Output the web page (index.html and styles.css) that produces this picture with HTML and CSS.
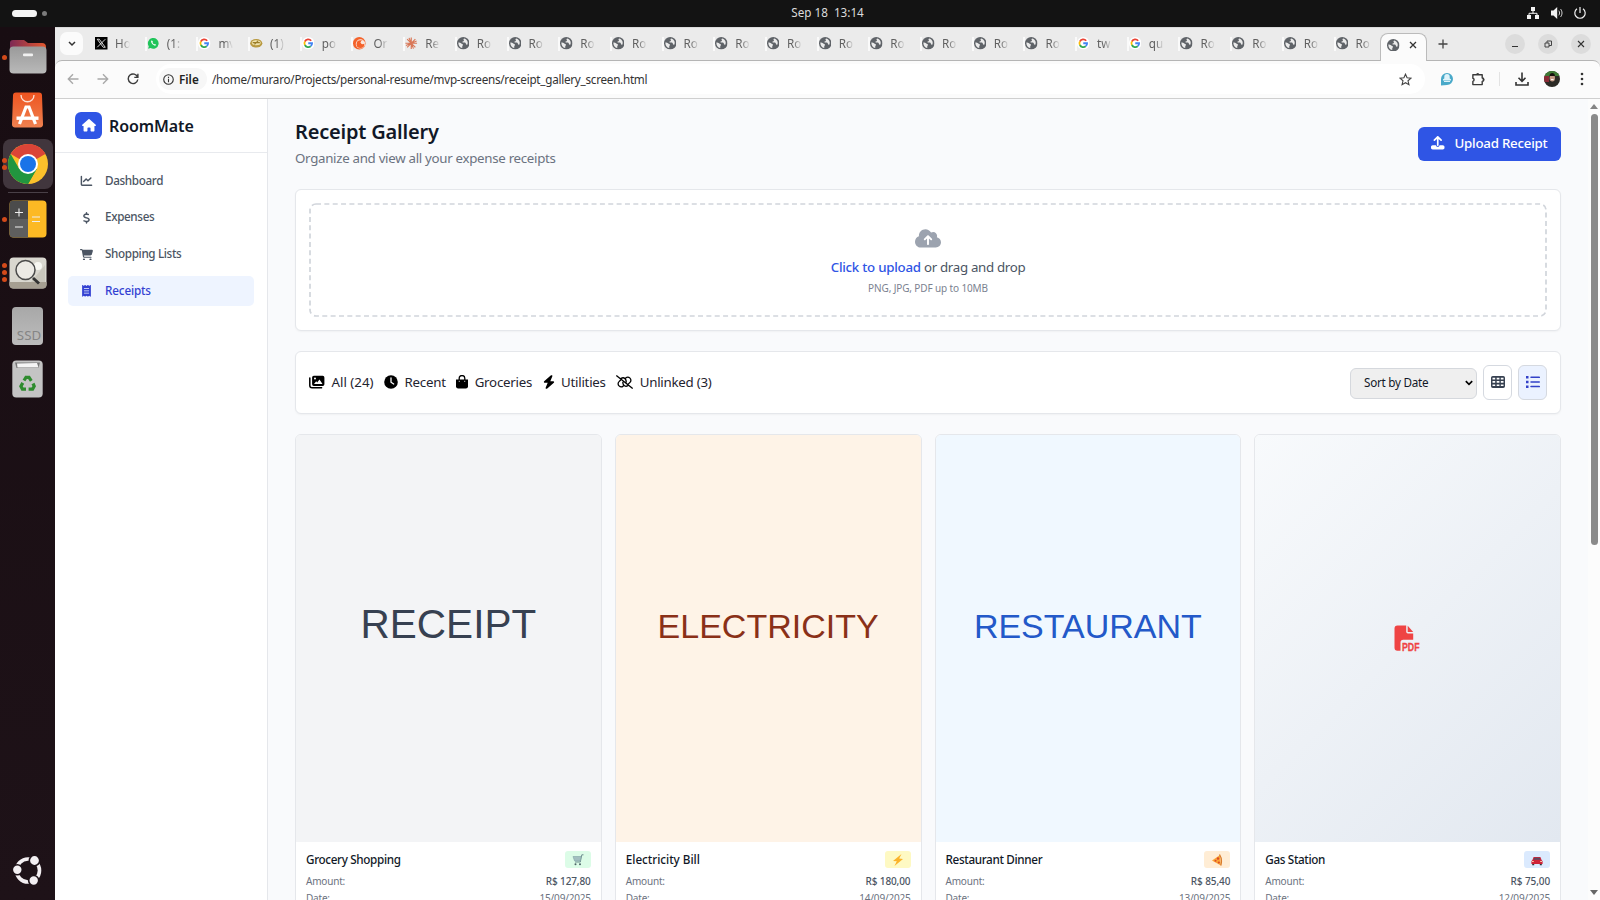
FILE: index.html
```html
<!DOCTYPE html>
<html lang="en">
<head>
<meta charset="utf-8">
<title>Receipt Gallery</title>
<link rel="stylesheet" href="styles.css">
</head>
<body>
<svg width="0" height="0" class="defs">
  <symbol id="globe" viewBox="0 0 14 14"><circle cx="7" cy="7" r="7" fill="#5f6368"/><path d="M8.2 1.6c-.9.3-1.2 1.2-.6 1.9.5.6.1 1.2-.7 1.3-.9.1-1 .9-.4 1.4h2.2c1 0 1.200.9 1.300 1.700.1.700.8.800 1.500.7.5-.9.700-2 .4-3.200-.5-1.900-1.900-3.300-3.700-3.800zM1.500 6.200c1.200.1 2.500.4 3.300 1.200.6.7 1.600.4 1.900 1.200.2.800-.7.900-.8 1.700-.1.800.2 1.300-.1 2.100C3.300 12 1.300 9.300 1.500 6.200z" fill="#ebebeb"/></symbol>
  <symbol id="google" viewBox="0 0 14 14"><circle cx="7" cy="7" r="7" fill="#fff"/><g fill="none" stroke-width="2"><path d="M10.300 4.200A4.300 4.300 0 0 0 3.200 5" stroke="#ea4335"/><path d="M3.200 5a4.300 4.300 0 0 0 0 4" stroke="#fbbc05"/><path d="M3.200 9a4.300 4.300 0 0 0 6.600 1.300" stroke="#34a853"/><path d="M9.800 10.300A4.300 4.300 0 0 0 11.300 7H7" stroke="#4285f4"/></g></symbol>
</svg>

<div class="topbar">
  <div class="workspaces"><span class="pill"></span><span class="dot"></span></div>
  <div class="clock">Sep 18&nbsp; 13:14</div>
  <div class="tray">
    <svg width="14" height="14" viewBox="0 0 14 14" fill="#f2f2f2"><path d="M5 1h4v4H5zM1 9h4v4H1zM9 9h4v4H9z"/><path d="M7 5v2.500M3 9V7.300h8V9" fill="none" stroke="#f2f2f2"/></svg>
    <svg width="14" height="14" viewBox="0 0 14 14"><path d="M1 4.500h2.500L7.200 1v12L3.500 9.500H1z" fill="#f2f2f2"/><path d="M8.800 4.700c1 1.300 1 3.300 0 4.600M10.500 3c2 2.300 2 5.700 0 8" fill="none" stroke="#d0d0d0"/></svg>
    <svg width="14" height="14" viewBox="0 0 14 14" fill="none" stroke="#f2f2f2" stroke-width="1.200"><path d="M4 2.800a5.200 5.200 0 1 0 6 0M7 1v6"/></svg>
  </div>
</div>

<div class="desktop">
  <div class="dock">
    <div class="app files"><i class="run"><b></b></i>
      <svg width="38" height="34" viewBox="0 0 38 34"><defs><linearGradient id="fg"><stop offset="0" stop-color="#7d2a55"/><stop offset="1" stop-color="#e4572e"/></linearGradient><linearGradient id="gg" x2="0" y2="1"><stop offset="0" stop-color="#9a9a9a"/><stop offset="1" stop-color="#b9b9b9"/></linearGradient></defs><path d="M1 3a3 3 0 0 1 3-3h11l4 3h14a4 4 0 0 1 4 4v12H1z" fill="url(#fg)"/><rect x=".5" y="6.500" width="37" height="27" rx="4" fill="url(#gg)"/><rect x="14" y="13.500" width="10" height="2.700" rx="1" fill="#f1f1f1"/></svg></div>
    <div class="app">
      <svg width="31" height="36" viewBox="0 0 31 36"><defs><linearGradient id="sg" x2="0" y2="1"><stop offset="0" stop-color="#ee5420"/><stop offset="1" stop-color="#ef8150"/></linearGradient></defs><path d="M4 .5h23a3 3 0 0 1 3 3L31 32a3 3 0 0 1-3 3.500H3A3 3 0 0 1 0 32L1 3.500a3 3 0 0 1 3-3z" fill="url(#sg)"/><path d="M9 3c0 9 13 9 13 0" fill="none" stroke="#fbe1d6" stroke-width="1.300"/><path d="M7.500 32l6.500-17h3l6.500 17" fill="none" stroke="#fff" stroke-width="3.200"/><path d="M4.500 26.200h22" stroke="#fff" stroke-width="3.400"/></svg></div>
    <div class="app chrome"><i class="run"><b></b><b></b></i>
      <svg width="40" height="40" viewBox="0 0 40 40"><circle cx="20" cy="20" r="20" fill="#fbc02b"/><path d="M20 20L2.700 10A20 20 0 0 1 37.300 10z" fill="#db4437"/><path d="M20 0a20 20 0 0 1 17.300 10H20z" fill="#db4437"/><path d="M2.700 10A20 20 0 0 0 20 40l8.700-15L20 20l-8.700 5z" fill="#22963f"/><path d="M20 40l8.700-15H20z" fill="#22963f"/><circle cx="20" cy="20" r="10" fill="#fff"/><circle cx="20" cy="20" r="8" fill="#1a73e8"/></svg></div>
    <div class="rule"></div>
    <div class="app"><i class="run"><b></b></i>
      <svg width="38" height="38" viewBox="0 0 38 38"><rect x=".5" y=".5" width="37" height="37" rx="4" fill="#fcb924"/><path d="M19 .5H4.500a4 4 0 0 0-4 4V19H19z" fill="#4b4b4b"/><path d="M19 19H.5v14.500a4 4 0 0 0 4 4H19z" fill="#5e5e5e"/><path d="M6 12.500h8M10 8.500v8M6 27h8M23 17h8M23 21.500h8" stroke="#eee" stroke-width="1.100"/></svg></div>
    <div class="app viewer"><i class="run"><b></b><b></b><b></b></i>
      <svg width="38" height="32" viewBox="0 0 38 32"><rect x=".5" y=".5" width="37" height="31" rx="4" fill="#d9d7cf"/><path d="M.5 25h37v2.500a4 4 0 0 1-4 4h-29a4 4 0 0 1-4-4z" fill="#a69f92"/><path d="M22 25L36 8v17z" fill="#c9c6bc"/><circle cx="29" cy="9" r="4" fill="#f7f7f2"/><circle cx="16.500" cy="13" r="9.500" fill="#eceae5" stroke="#4b4b4b" stroke-width="1.500"/><path d="M24 21l6 5.500" stroke="#333" stroke-width="3"/></svg></div>
    <div class="app ssd"><span>SSD</span></div>
    <div class="app">
      <svg width="31" height="38" viewBox="0 0 31 38"><rect x=".3" y=".5" width="30.400" height="37" rx="4" fill="#c4c4c4"/><path d="M3 2.500h25l-1.500 5.500h-22z" fill="#777"/><path d="M5 3.500l20-.5 1.500 4.500H5.500z" fill="#f5f5f5"/><g fill="none" stroke="#2e8b2e" stroke-width="3.200"><path d="M12 20.500l2-3.200h3l2.300 3.500"/><path d="M21 23.500l1.200 2.700-1.600 2.900h-4"/><path d="M14 29.100h-3.600l-1.500-2.900 1.900-3.300"/></g></svg></div>
    <div class="launcher">
      <svg width="30" height="30" viewBox="0 0 30 30"><circle cx="15" cy="15.500" r="11.500" fill="none" stroke="#f3eff2" stroke-width="3.600"/><g fill="#f3eff2" stroke="#1d1218" stroke-width="1.600"><circle cx="21.500" cy="5.500" r="5.200"/><circle cx="4.300" cy="14.800" r="5"/><circle cx="20.700" cy="25.500" r="5"/></g></svg></div>
  </div>

  <div class="window">
    <div class="tabstrip">
      <div class="tabsearch"><svg width="8" height="6" viewBox="0 0 8 6"><path d="M1 1l3 3 3-3" fill="none" stroke="#333" stroke-width="1.500"/></svg></div>
      <div class="tabs" id="tabs">
        <div class="tab"><svg viewBox="0 0 14 14"><path d="M0 0h14v14H0z"/><path d="M2.500 2.500h2.300l6.700 9H9.200zM11.500 2.500l-9 9" fill="none" stroke="#eee"/></svg><span>Ho</span></div>
        <div class="tab"><svg viewBox="0 0 14 14"><path d="M1.200 13.200L2 10.400A6 6 0 1 1 4 12.300z" fill="#20c45a"/><path d="M4.800 4c-1 2 2 5.600 4.400 5.900l1-1.200-1.500-.9-.8.600-1.800-1.900.6-.9-.8-1.500z" fill="#fff"/></svg><span>(1:</span></div>
        <div class="tab"><svg><use href="#google"/></svg><span>mv</span></div>
        <div class="tab"><svg viewBox="0 0 14 14"><ellipse cx="7" cy="7" rx="6.800" ry="4.800" fill="#b8993f"/><ellipse cx="7" cy="6.300" rx="5" ry="2.800" fill="#efe3ae"/><path d="M3 6.300h8M5 8.300l4-4" stroke="#9b7d28" stroke-width="1.200"/></svg><span>(1)</span></div>
        <div class="tab"><svg><use href="#google"/></svg><span>po</span></div>
        <div class="tab"><svg viewBox="0 0 14 14"><circle cx="7" cy="7" r="7" fill="#f4622a"/><circle cx="8.300" cy="7.800" r="5.200" fill="#fbe6dc"/><circle cx="8.300" cy="8" r="4.300" fill="#f4622a"/><circle cx="10.800" cy="6" r="2.200" fill="#fbe6dc"/></svg><span>Or</span></div>
        <div class="tab"><svg viewBox="0 0 14 14"><path d="M7 .5v13M.5 7h13M2.400 2.400l9.200 9.200M11.600 2.400l-9.200 9.200M4.500 1l5 12M1 9.500l12-5" stroke="#d97757" stroke-width="1.300"/></svg><span>Re</span></div>
      </div>
      <div class="active"><svg class="fav"><use href="#globe"/></svg><svg class="x" viewBox="0 0 8 8"><path d="M1 1l6 6M7 1L1 7" stroke="#333" stroke-width="1.300"/></svg></div>
      <svg class="plus" viewBox="0 0 10 10"><path d="M5 .5v9M.5 5h9" stroke="#444" stroke-width="1.300"/></svg>
      <div class="wm">
        <b><svg viewBox="0 0 8 8"><path d="M1 6.500h6" stroke="#333"/></svg></b>
        <b><svg viewBox="0 0 8 8"><path d="M1 3h4v4H1zM3 3V1h4.500v4.500H5" fill="none" stroke="#444"/></svg></b>
        <b><svg viewBox="0 0 8 8"><path d="M1 1l6 6M7 1L1 7" stroke="#333" stroke-width="1.100"/></svg></b>
      </div>
    </div>
    <div class="toolbar">
      <svg class="nav" viewBox="0 0 12 12"><path d="M11.500 6H1.500M6 1.300L1.300 6 6 10.700" stroke="#a9a9a9"/></svg>
      <svg class="nav" viewBox="0 0 12 12"><path d="M.5 6h10M6 1.300L10.700 6 6 10.700" stroke="#a9a9a9"/></svg>
      <svg class="nav" viewBox="0 0 12 12"><path d="M10.600 4.200A4.800 4.800 0 1 0 10.800 6.500M10.900.8v3.600H7.300" stroke="#3c3c3c"/></svg>
      <div class="omnibox">
        <div class="chip"><svg viewBox="0 0 12 12"><circle cx="6" cy="6" r="5.200" fill="none" stroke="#333" stroke-width="1.200"/><path d="M6 5.300V9M6 3v1.300" stroke="#333" stroke-width="1.200"/></svg>File</div>
        <div class="url">/home/muraro/Projects/personal-resume/mvp-screens/receipt_gallery_screen.html</div>
        <svg class="star" viewBox="0 0 14 14"><path d="M7 1.300l1.700 3.900 4.200.4-3.200 2.800 1 4.200L7 10.400l-3.700 2.200 1-4.200L1.100 5.600l4.200-.4z" fill="none" stroke="#444" stroke-width="1.200"/></svg>
      </div>
      <div class="tools">
        <svg class="i-ext" viewBox="0 0 14 14"><path d="M1 13.500V7a6 6 0 1 1 6 6z" fill="#49a9c9"/><path d="M3 8.500h8V7.200L9.700 6.500V4.800A2.700 2.700 0 0 0 4.300 4.800v1.700L3 7.200z" fill="#dff3fa"/><path d="M4 9.500h6" stroke="#dff3fa"/></svg>
        <svg class="i-puz" viewBox="0 0 14 15"><path d="M1.500 3h10v3.500a1.500 1.500 0 0 1 0 3.500v3.500h-10V10a1.700 1.700 0 0 0 0-3.300z" fill="none" stroke="#3a3a3a" stroke-width="1.500" stroke-linejoin="round"/><path d="M5 2.800a1.700 1.700 0 0 1 3.400 0zM12 6.500a1.700 1.700 0 0 1 0 3.500z" fill="#3a3a3a"/></svg>
        <span class="bar"></span>
        <svg class="i-dl" viewBox="0 0 14 14"><path d="M7 .5v8.500M3.500 5.800L7 9.300l3.500-3.500M1 10v3h12v-3" fill="none" stroke="#333" stroke-width="1.600"/></svg>
        <svg class="i-av" viewBox="0 0 16 16"><defs><clipPath id="av"><circle cx="8" cy="8" r="8"/></clipPath></defs><g clip-path="url(#av)"><path d="M0 0h16v16H0z" fill="#2c2a25"/><path d="M0 0h16v5H0z" fill="#3f7a35"/><path d="M0 5h5v6H0z" fill="#8a2a35"/><ellipse cx="8.300" cy="7" rx="2.700" ry="3.500" fill="#c49a86"/><path d="M5.500 5c0-4 5.500-4 5.500 0z" fill="#17110f"/><path d="M7 8.600h2.600" stroke="#fff"/></g></svg>
        <svg class="i-dots" viewBox="0 0 4 14" fill="#333"><circle cx="2" cy="2" r="1.300"/><circle cx="2" cy="7" r="1.300"/><circle cx="2" cy="12" r="1.300"/></svg>
      </div>
    </div>

    <div class="page">
      <aside class="sidebar">
        <div class="brand">
          <span class="logo"><svg viewBox="0 0 576 512" fill="#fff"><path d="M575.8 255.500c0 18-15 32.100-32 32.100h-32l.7 160.200c0 2.700-.2 5.400-.5 8.100V472c0 22.100-17.900 40-40 40H392c-22.100 0-40-17.900-40-40V384c0-17.700-14.300-32-32-32H256c-17.700 0-32 14.300-32 32v88c0 22.100-17.900 40-40 40H104c-22.100 0-40-17.900-40-40V287.600H32c-18 0-32-14-32-32.100c0-9 3-17 10-24L266.400 8c7-7 15-8 22-8s15 2 21 7L564.800 231.500c8 7 12 15 11 24z"/></svg></span>
          <span class="name">RoomMate</span>
        </div>
        <nav class="menu">
          <a><svg viewBox="0 0 512 512"><path d="M64 64c0-17.700-14.300-32-32-32S0 46.300 0 64V400c0 44.200 35.800 80 80 80H480c17.700 0 32-14.300 32-32s-14.300-32-32-32H80c-8.800 0-16-7.200-16-16V64zm406.600 86.600c12.500-12.500 12.500-32.800 0-45.300s-32.800-12.500-45.300 0L320 210.700l-57.400-57.400c-12.500-12.500-32.800-12.500-45.300 0l-112 112c-12.500 12.500-12.500 32.800 0 45.300s32.800 12.500 45.300 0L240 221.300l57.400 57.400c12.500 12.500 32.800 12.500 45.300 0l128-128z"/></svg><span>Dashboard</span></a>
          <a><svg viewBox="0 0 320 512"><path d="M160 0c17.700 0 32 14.300 32 32V67.700c1.600 .2 3.100 .4 4.700 .7c.4 .1 .7 .1 1.100 .2l48 8.800c17.400 3.200 28.900 19.900 25.700 37.200s-19.900 28.900-37.200 25.700l-47.500-8.700c-31.300-4.600-58.900-1.500-78.300 6.200s-27.200 18.300-29 28.100c-2 10.700-.5 16.700 1.200 20.400c1.800 3.900 5.500 8.300 12.800 13.200c16.300 10.700 41.300 17.700 73.700 26.300l2.900 .8c28.600 7.600 63.600 16.800 89.600 33.800c14.200 9.300 27.600 21.900 35.900 39.500c8.500 17.900 10.300 37.900 6.400 59.200c-6.900 38-33.100 63.400-65.600 76.700c-13.700 5.600-28.600 9.200-44.400 11V480c0 17.700-14.300 32-32 32s-32-14.300-32-32V445.100c-.4-.1-.9-.1-1.300-.2l-.2 0c-24.400-3.800-64.500-14.300-91.500-26.300c-16.100-7.200-23.400-26.100-16.200-42.200s26.100-23.400 42.200-16.200c20.900 9.300 55.300 18.500 75.200 21.600c31.900 4.700 58.200 2 76-5.300c16.900-6.900 24.600-16.900 26.800-28.900c1.900-10.600 .4-16.700-1.300-20.400c-1.900-4-5.600-8.400-13-13.300c-16.400-10.700-41.500-17.700-74-26.300l-2.800-.7C119.400 279.300 84.400 270 58.400 253c-14.200-9.300-27.500-22-35.800-39.600c-8.400-17.900-10.100-37.900-6.100-59.200C23.700 116 52.300 91.200 84.800 78.300c13.300-5.300 27.900-8.900 43.200-11V32c0-17.700 14.300-32 32-32z"/></svg><span>Expenses</span></a>
          <a><svg viewBox="0 0 576 512"><path d="M0 24C0 10.700 10.700 0 24 0H69.500c22 0 41.500 12.800 50.600 32h411c26.300 0 45.500 25 38.600 50.400l-41 152.300c-8.500 31.400-37 53.300-69.500 53.300H170.700l5.400 28.500c2.200 11.300 12.100 19.500 23.600 19.500H488c13.300 0 24 10.700 24 24s-10.700 24-24 24H199.700c-34.600 0-64.300-24.600-70.700-58.500L77.400 54.500c-.7-3.800-4-6.500-7.900-6.500H24C10.700 48 0 37.300 0 24zM128 464a48 48 0 1 1 96 0 48 48 0 1 1 -96 0zm336-48a48 48 0 1 1 0 96 48 48 0 1 1 0-96z"/></svg><span>Shopping Lists</span></a>
          <a class="on"><svg viewBox="0 0 384 512"><path fill-rule="evenodd" d="M14 2c6-3 13-2 18 3l40 34 48-36c6-4 13-4 18 0l54 36 54-36c5-4 12-4 18 0l48 36 40-34c5-5 12-6 18-3s14 8 14 22v464c0 14-8 19-14 22s-13 2-18-3l-40-34-48 36c-6 4-13 4-18 0l-54-36-54 36c-5 4-12 4-18 0l-48-36-40 34c-5 5-12 6-18 3S0 502 0 488V24C0 10 8 5 14 2zM80 144v32h224v-32zM80 240v32h224v-32zM80 336v32h224v-32z"/></svg><span>Receipts</span></a>
        </nav>
      </aside>

      <main class="main">
        <header class="head">
          <div><h1>Receipt Gallery</h1><p>Organize and view all your expense receipts</p></div>
          <button class="upload"><svg viewBox="0 0 512 512" fill="#fff"><path d="M288 109.300V352c0 17.700-14.300 32-32 32s-32-14.300-32-32V109.300l-73.400 73.400c-12.500 12.500-32.800 12.500-45.300 0s-12.500-32.800 0-45.300l128-128c12.500-12.500 32.800-12.500 45.300 0l128 128c12.500 12.500 12.500 32.800 0 45.300s-32.800 12.500-45.300 0L288 109.300zM64 352H192c0 35.300 28.700 64 64 64s64-28.700 64-64H448c35.300 0 64 28.700 64 64v32c0 35.300-28.700 64-64 64H64c-35.300 0-64-28.700-64-64V416c0-35.300 28.700-64 64-64z"/></svg><span>Upload Receipt</span></button>
        </header>

        <section class="panel dropwrap">
          <div class="drop">
            <svg class="dash"><rect x="1" y="1" width="1236" height="112" rx="6"/></svg>
            <svg class="cloud" viewBox="0 0 640 512"><path d="M144 480C64.500 480 0 415.500 0 336c0-62.800 40.200-116.200 96.200-135.900c-.1-2.700-.2-5.400-.2-8.100c0-88.400 71.600-160 160-160c59.300 0 111 32.200 138.700 80.200C409.900 102 428.300 96 448 96c53 0 96 43 96 96c0 12.200-2.300 23.800-6.400 34.600C596 238.400 640 290.100 640 352c0 70.700-57.300 128-128 128H144zm79-217c-9.400 9.400-9.400 24.600 0 33.900s24.600 9.400 33.900 0l39-39V392c0 13.300 10.700 24 24 24s24-10.700 24-24V257.900l39 39c9.400 9.400 24.600 9.400 33.900 0s9.400-24.600 0-33.900l-80-80c-9.400-9.400-24.600-9.400-33.900 0l-80 80z"/></svg>
            <p class="cta"><b>Click to upload</b> or drag and drop</p>
            <p class="hint">PNG, JPG, PDF up to 10MB</p>
          </div>
        </section>

        <section class="panel filters">
          <div class="chips">
            <span class="all"><svg width="16" height="14" viewBox="0 0 16 14"><path d="M.8 3v7.500a2.300 2.300 0 0 0 2.300 2.300h9.500" fill="none" stroke="#000" stroke-width="1.500" stroke-linecap="round"/><path fill-rule="evenodd" d="M4.800.8h8.900a1.700 1.700 0 0 1 1.700 1.700v6.700a1.700 1.700 0 0 1-1.700 1.700H4.800a1.700 1.700 0 0 1-1.700-1.700V2.500A1.700 1.700 0 0 1 4.800.8zM5 9h8.500l-3-4.600-2.300 3-1-1.200zM5 3.400a1 1 0 1 0 2 0 1 1 0 1 0-2 0z"/></svg>All (24)</span>
            <span><svg width="14" height="14" viewBox="0 0 14 14"><circle cx="7" cy="7" r="6.800"/><path d="M7 3v4.200l2.700 1.800" fill="none" stroke="#fff" stroke-width="1.300" stroke-linecap="round"/></svg>Recent</span>
            <span><svg width="12" height="14" viewBox="0 0 12 14"><path d="M0 4.500h12v6.800a2.200 2.200 0 0 1-2.200 2.200H2.200A2.200 2.200 0 0 1 0 11.300z"/><path d="M3.200 6.500V3.300a2.800 2.800 0 0 1 5.600 0v3.200" fill="none" stroke="#000" stroke-width="1.300"/><path d="M2.800 6.300h.9M8.300 6.300h.9" stroke="#fff"/></svg>Groceries</span>
            <span><svg width="12" height="14" viewBox="0 0 448 512"><path d="M349.400 44.600c5.900-13.700 1.500-29.700-10.600-38.500s-28.600-8-39.900 1.800l-256 224c-10 8.800-13.600 22.900-8.900 35.300S50.700 288 64 288H175.500L98.600 467.400c-5.900 13.700-1.500 29.700 10.600 38.500s28.600 8 39.900-1.800l256-224c10-8.800 13.600-22.900 8.900-35.300s-16.600-20.700-30-20.700H272.500L349.400 44.600z"/></svg>Utilities</span>
            <span><svg width="17" height="14" viewBox="0 0 640 512"><path fill="none" stroke="#000" stroke-width="50" stroke-linecap="round" d="M24 24L616 488M196 120a114 114 0 0 1 150 20c44 46 44 108 24 160M366 108c44-42 114-42 160 2s46 116 0 160l-66 66M444 392a114 114 0 0 1-150-20c-30-32-40-70-34-110M274 404c-44 42-114 42-160-2s-46-116 0-160l52-52"/></svg>Unlinked (3)</span>
          </div>
          <div class="ctl">
            <div class="select"><span>Sort by Date</span><svg width="8" height="6" viewBox="0 0 8 6"><path d="M.8 1.200L4 4.300l3.200-3.100" fill="none" stroke="#000" stroke-width="1.700"/></svg></div>
            <div class="vb"><svg viewBox="0 0 14 12"><path fill-rule="evenodd" d="M1.800 0h10.400A1.800 1.800 0 0 1 14 1.800v8.400a1.800 1.800 0 0 1-1.800 1.800H1.800A1.800 1.800 0 0 1 0 10.200V1.800A1.800 1.800 0 0 1 1.800 0zM1.500 1.800v1.700h2.700v-1.700zM5.700 1.800v1.700h2.700v-1.700zM9.800 1.800v1.700h2.700v-1.700zM1.500 5.100v1.700h2.700V5.100zM5.700 5.100v1.700h2.700V5.100zM9.800 5.100v1.700h2.700V5.100zM1.500 8.400v1.700h2.700v-1.700zM5.700 8.400v1.700h2.700v-1.700zM9.800 8.400v1.700h2.700v-1.700z" fill="#374151"/></svg></div>
            <div class="vb on"><svg viewBox="0 0 14 12"><path d="M0 0h2.500v2.500H0zM0 4.700h2.500v2.500H0zM0 9.400h2.500v2.500H0z" fill="#3341c8"/><path d="M5 1.300h8.300M5 6h8.300M5 10.600h8.300" stroke="#3341c8" stroke-width="1.500" stroke-linecap="round"/></svg></div>
          </div>
        </section>

        <section class="grid">
          <article class="card">
            <div class="img receipt">RECEIPT</div>
            <div class="body">
              <div class="row title"><h2>Grocery Shopping</h2><span class="badge green"><svg width="12" height="12" viewBox="0 0 12 12" fill="none"><path d="M11.500.8H9.800L8.300 8H3" stroke="#6f8f90"/><path d="M1 2.500h8L8.200 7H2.600z" fill="#a3bfc0" stroke="#7fa3a4" stroke-width=".6"/><circle cx="3.500" cy="10.300" r="1" fill="#4d6668"/><circle cx="8" cy="10.300" r="1" fill="#4d6668"/></svg></span></div>
              <div class="row meta"><span>Amount:</span><b>R$ 127,80</b></div>
              <div class="row meta date"><span>Date:</span><span>15/09/2025</span></div>
            </div>
          </article>
          <article class="card">
            <div class="img electric">ELECTRICITY</div>
            <div class="body">
              <div class="row title"><h2 class="loose">Electricity Bill</h2><span class="badge yellow"><svg width="12" height="12" viewBox="0 0 12 12"><path d="M9.500 0L1 7l3.800.3L2.500 12 11 5l-3.800-.4z" fill="#fbb32a"/></svg></span></div>
              <div class="row meta"><span>Amount:</span><b>R$ 180,00</b></div>
              <div class="row meta date"><span>Date:</span><span>14/09/2025</span></div>
            </div>
          </article>
          <article class="card">
            <div class="img restaurant">RESTAURANT</div>
            <div class="body">
              <div class="row title"><h2>Restaurant Dinner</h2><span class="badge orange"><svg width="12" height="12" viewBox="0 0 12 12"><path d="M1 6.500L9 1l.8 10.500z" fill="#fba537"/><path d="M8.500.5c2 3 2.400 7 1.300 11" fill="none" stroke="#d97c2b" stroke-width="1.300"/><circle cx="7" cy="4.500" r="1.200" fill="#dc4a28"/><circle cx="4.500" cy="6.700" r="1" fill="#dc4a28"/><circle cx="7.800" cy="8.500" r="1.100" fill="#dc4a28"/></svg></span></div>
              <div class="row meta"><span>Amount:</span><b>R$ 85,40</b></div>
              <div class="row meta date"><span>Date:</span><span>13/09/2025</span></div>
            </div>
          </article>
          <article class="card">
            <div class="img pdf"><svg width="27" height="27" viewBox="0 0 27 27"><path d="M3.500.5h8.700v6.200a1.700 1.700 0 0 0 1.700 1.700h5.300v6.400H9.300a2.800 2.800 0 0 0-2.800 2.800v8.100h-3A3 3 0 0 1 .5 22.700V3.500a3 3 0 0 1 3-3z" fill="#ef4444"/><path d="M13.700.7l5.500 6.200h-5.500z" fill="#ef4444"/><text x="8" y="25.500" textLength="17.500" lengthAdjust="spacingAndGlyphs" class="pdftext">PDF</text></svg></div>
            <div class="body">
              <div class="row title"><h2>Gas Station</h2><span class="badge blue"><svg width="12" height="12" viewBox="0 0 12 12"><path d="M2.600 3h6.800l1.200 3 1 1.200V10H.4V7.200l1-1.200z" fill="#cf2338"/><path d="M3.300 3.800h5.400l.8 2h-7z" fill="#5b4a60"/><path d="M1.200 10h2v1.300h-2zM8.800 10h2v1.300h-2z" fill="#333"/><path d="M1 7.500h1.800M9.200 7.500H11" stroke="#f9c9a8"/></svg></span></div>
              <div class="row meta"><span>Amount:</span><b>R$ 75,00</b></div>
              <div class="row meta date"><span>Date:</span><span>12/09/2025</span></div>
            </div>
          </article>
        </section>
      </main>

      <div class="scroll"><i class="up"></i><i class="thumb"></i><i class="down"></i></div>
    </div>
  </div>
</div>
<script src="tabs.js"></script>
</body>
</html>
```
FILE: tabs.js
```js
const labels = [...Array(12).fill('Ro'), 'tw', 'qu', ...Array(4).fill('Ro')];
const tabs = document.getElementById('tabs');
for (const label of labels) {
  const icon = label === 'Ro' ? 'globe' : 'google';
  tabs.insertAdjacentHTML('beforeend',
    `<div class="tab"><svg><use href="#${icon}"/></svg><span>${label}</span></div>`);
}
```
FILE: styles.css
```css
* { box-sizing: border-box; margin: 0; }
body { width: 1600px; height: 900px; overflow: hidden; background: #131313; font: 13.3px/20px "Noto Sans", "Open Sans", sans-serif; color: #111827; display: flex; flex-direction: column; }
svg { display: block; flex: none; }
.defs { position: absolute; }
h1, h2, p { font-weight: 400; }

.topbar { height: 27px; flex: none; display: grid; grid-template-columns: 1fr auto 1fr; align-items: center; background: #131313; padding-left: 55px; color: #dcdcdc; }
.workspaces { display: flex; align-items: center; gap: 5px; margin-left: -43px; }
.pill { width: 25px; height: 7px; border-radius: 4px; background: #f4f4f4; }
.dot { width: 5px; height: 5px; border-radius: 50%; background: #7b7b7b; }
.clock { font-size: 11.7px; line-height: 22px; padding-bottom: 3px; }
.tray { display: flex; justify-content: flex-end; gap: 9.500px; padding: 0 13px 1px 0; }

.desktop { flex: 1; min-height: 0; display: flex; }
.dock { width: 55px; flex: none; background: linear-gradient(#180d12, #1e1218); display: flex; flex-direction: column; align-items: center; padding-top: 5px; }
.app { position: relative; width: 50px; height: 50px; margin-bottom: 3.300px; border-radius: 8px; display: flex; align-items: center; justify-content: center; flex: none; }
.app.chrome { background: #41363d; }
.rule { width: 40px; height: 1px; background: #494047; margin-bottom: 1.500px; }
.run { position: absolute; left: -1px; top: 0; height: 50px; display: flex; flex-direction: column; justify-content: center; gap: 2px; }
.run b { width: 5px; height: 5px; border-radius: 50%; background: #d34a1a; }
.ssd span { width: 31px; height: 38px; border-radius: 4px; background: linear-gradient(#a8a8a8, #bcbcbc); color: #858585; font-size: 13.300px; line-height: 57px; padding-left: 3px; text-align: center; }
.launcher { margin-top: auto; margin-bottom: 15px; }

.window { flex: 1; min-width: 0; display: flex; flex-direction: column; background: #ebebeb; }
.tabstrip { height: 33px; flex: none; display: flex; align-items: center; border-top: 1px solid #dadada; padding-bottom: 1px; }
.tabsearch { width: 23px; height: 23px; border-radius: 7px; background: #fbfbfb; margin: 0 12px 0 5px; display: flex; align-items: center; justify-content: center; flex: none; }
.tabs { display: flex; width: 1285px; flex: none; }
.tab { width: 51.700px; height: 14px; display: flex; align-items: center; flex: none; border-right: 2px solid #fafafa; color: #606060; font-size: 11.700px; }
.tab svg { width: 12.500px; height: 12.500px; }
.tab span { width: 20px; margin-left: 7.500px; padding-bottom: 1px; -webkit-mask-image: linear-gradient(90deg, #000 30%, transparent 75%); mask-image: linear-gradient(90deg, #000 30%, transparent 75%); }
.tabs .tab:last-child { border-color: transparent; }
.active { width: 47px; height: 28px; align-self: flex-end; background: #fbfbfb; border: 1px solid #bbb; border-bottom: 0; border-radius: 8px 8px 0 0; display: flex; align-items: center; padding: 0 9px 5px 6px; justify-content: space-between; flex: none; margin-bottom: -2px; z-index: 1; }
.fav { width: 12.500px; height: 12.500px; }
.x { width: 8px; height: 8px; }
.plus { width: 10px; height: 10px; margin-left: 11px; }
.wm { margin-left: auto; display: flex; gap: 13px; padding-right: 9px; }
.wm b { width: 20px; height: 20px; border-radius: 50%; background: #dcdcdc; display: flex; align-items: center; justify-content: center; }
.wm svg { width: 8px; height: 8px; }

.toolbar { height: 39px; flex: none; background: #fbfbfb; border: 1px solid #b5b5b5; border-width: 1px 0; border-bottom-color: #cfcfcf; border-radius: 7px 7px 0 0; display: flex; align-items: center; padding: 0 0 1px 12px; }
.nav { width: 12px; height: 12px; fill: none; stroke-width: 1.400px; margin-right: 18px; }
.omnibox { width: 1269px; height: 30px; border-radius: 15px; background: #fff; display: flex; align-items: center; padding-left: 3px; flex: none; margin-left: -1px; }
.chip { width: 48px; height: 22px; border-radius: 11px; background: #f7f7f7; display: flex; align-items: center; gap: 5px; padding-left: 4px; font-size: 11.700px; line-height: 18px; font-weight: 600; color: #222; }
.chip svg { width: 11px; height: 11px; }
.url { margin-left: 5px; font-size: 11.700px; padding-bottom: 1px; letter-spacing: -.265px; color: #333; }
.star { width: 13px; height: 13px; margin-left: auto; margin-right: 13px; }
.tools { flex: 1; display: flex; align-items: center; padding-left: 15px; }
.tools svg { width: 14px; height: 14px; }
.tools .i-puz { margin-left: 17px; }
.tools .bar { width: 1px; height: 14px; background: #e3e3e3; margin-left: 14px; }
.tools .i-dl { margin-left: 14.500px; }
.tools .i-av { width: 16px; height: 16px; margin-left: 15px; }
.tools .i-dots { width: 4px; height: 14px; margin-left: 20px; }

.page { flex: 1; min-height: 0; display: flex; background: #f9fafc; overflow: hidden; }
.sidebar { width: 213px; flex: none; background: #fff; border-right: 1px solid #e5e7eb; }
.brand { height: 54px; border-bottom: 1px solid #e8eaee; display: flex; align-items: center; padding-left: 20px; gap: 7px; }
.logo { width: 27px; height: 27px; border-radius: 6px; background: #2f55e5; display: flex; align-items: center; justify-content: center; }
.logo svg { width: 14px; height: 12.500px; }
.name { font-size: 16px; font-weight: 600; letter-spacing: -.1px; }
.menu { padding: 13px; display: flex; flex-direction: column; gap: 6.700px; }
.menu a { height: 30px; border-radius: 5px; display: flex; align-items: center; padding-left: 12px; color: #4b5563; font-size: 11.700px; font-weight: 500; letter-spacing: -.36px; }
.menu span { padding-bottom: 3px; }
.menu svg { width: 13px; height: 11.700px; margin-right: 12px; fill: #4b5563; }
.menu a.on { background: #eef4ff; color: #3341d2; letter-spacing: -.15px; }
.menu a.on svg { fill: #3341d2; }

.main { width: 1320px; flex: none; padding: 19px 27px 0; }
.head { display: flex; justify-content: space-between; height: 71px; }
.head h1 { font-size: 20px; line-height: 27px; font-weight: 600; letter-spacing: -.2px; }
.head p { margin-top: 3px; color: #6b7280; letter-spacing: -.3px; }
.upload { width: 143px; height: 34px; margin-top: 9px; border: 0; border-radius: 6px; background: #2f55e5; color: #fff; font: 500 13.300px "Noto Sans", sans-serif; letter-spacing: -.24px; display: flex; align-items: center; padding: 0 0 2px 13px; gap: 10px; white-space: nowrap; }
.upload svg { width: 13.500px; height: 13.500px; }

.panel { background: #fff; border: 1px solid #e5e7eb; border-radius: 6px; box-shadow: 0 1px 2px rgba(0,0,0,.04); }
.dropwrap { height: 142px; padding: 13px; }
.drop { position: relative; height: 114px; display: flex; flex-direction: column; align-items: center; padding-top: 25px; }
.dash { position: absolute; left: 0; top: 0; width: 1238px; height: 114px; }
.dash rect { fill: none; stroke: #d1d5db; stroke-width: 1.700px; stroke-dasharray: 5px 3.350px; }
.cloud { width: 26px; height: 20.800px; fill: #9ca3af; }
.cta { margin-top: 8.500px; color: #4b5563; letter-spacing: -.32px; }
.cta b { font-weight: 500; color: #2f55e5; letter-spacing: -.25px; }
.hint { font-size: 10px; line-height: 14px; margin-top: 3.500px; color: #7b8290; letter-spacing: -.13px; }

.filters { margin-top: 20px; height: 63px; padding: 0 13px; display: flex; align-items: center; justify-content: space-between; }
.chips { display: flex; gap: 10.500px; padding-bottom: 2px; color: #1f2430; letter-spacing: -.25px; }
.chips span { display: flex; align-items: center; gap: 6.500px; }
.chips .all { letter-spacing: 0; }
.chips svg { fill: #000; }
.ctl { display: flex; align-items: center; gap: 6px; }
.select { width: 127px; height: 31px; border: 1px solid #d5d8dd; border-radius: 6px; background: #efefef; display: flex; align-items: center; justify-content: space-between; padding: 0 3px 0 13px; font-size: 11.700px; letter-spacing: -.25px; margin-top: 1px; }
.select span { padding-bottom: 2px; }
.vb { width: 29px; height: 35px; border: 1px solid #d5d9e0; border-radius: 6px; display: flex; align-items: center; justify-content: center; padding-bottom: 2px; }
.vb svg { width: 14px; height: 12px; }
.vb.on { background: #ebf2ff; }

.grid { margin-top: 20px; display: grid; grid-template-columns: repeat(4, 1fr); gap: 13px; }
.card { height: 520px; background: #fff; border: 1px solid #e5e7eb; border-radius: 6px; overflow: hidden; }
.img { height: 407px; display: flex; align-items: center; justify-content: center; font-family: "Liberation Sans", Arial, sans-serif; }
.receipt { background: #f3f4f6; color: #374151; font-size: 40.500px; padding-bottom: 30px; }
.electric { background: #fef3e7; color: #8a3018; font-size: 34px; padding-bottom: 26px; }
.restaurant { background: #f0f8ff; color: #2359c9; font-size: 34px; padding-bottom: 26px; }
.pdf { background: linear-gradient(135deg, #f8fafc, #e2e8f0); }
.pdftext { font: 700 11px "Liberation Sans", Arial, sans-serif; fill: #ef4444; stroke: #ef4444; stroke-width: .3px; }
.body { padding: 9px 10px; }
.row { display: flex; justify-content: space-between; align-items: center; }
.title { height: 17px; }
.title h2 { font-size: 11.700px; font-weight: 500; letter-spacing: -.34px; padding-bottom: 2px; }
.title .loose { letter-spacing: -.02px; }
.badge { width: 26px; height: 17px; border-radius: 3px; display: flex; align-items: center; justify-content: center; }
.green { background: #dcfce7; }
.yellow { background: #fef9c3; }
.orange { background: #ffedd5; }
.blue { background: #dbeafe; }
.meta { height: 18px; font-size: 10px; color: #6b7280; letter-spacing: -.2px; margin-top: 4px; }
.meta b { font-weight: 500; color: #4b5563; letter-spacing: -.1px; }
.meta.date { margin-top: -1px; }

.scroll { width: 12px; flex: none; background: #fcfcfc; display: flex; flex-direction: column; align-items: center; padding: 5px 0 5px; }
.up, .down { border: 4px solid transparent; }
.up { border-top: 0; border-bottom: 5px solid #858585; }
.down { border-bottom: 0; border-top: 5px solid #666; margin-top: auto; }
.thumb { width: 7px; height: 431px; border-radius: 4px; background: #8a8a8a; margin-top: 5px; }
```
